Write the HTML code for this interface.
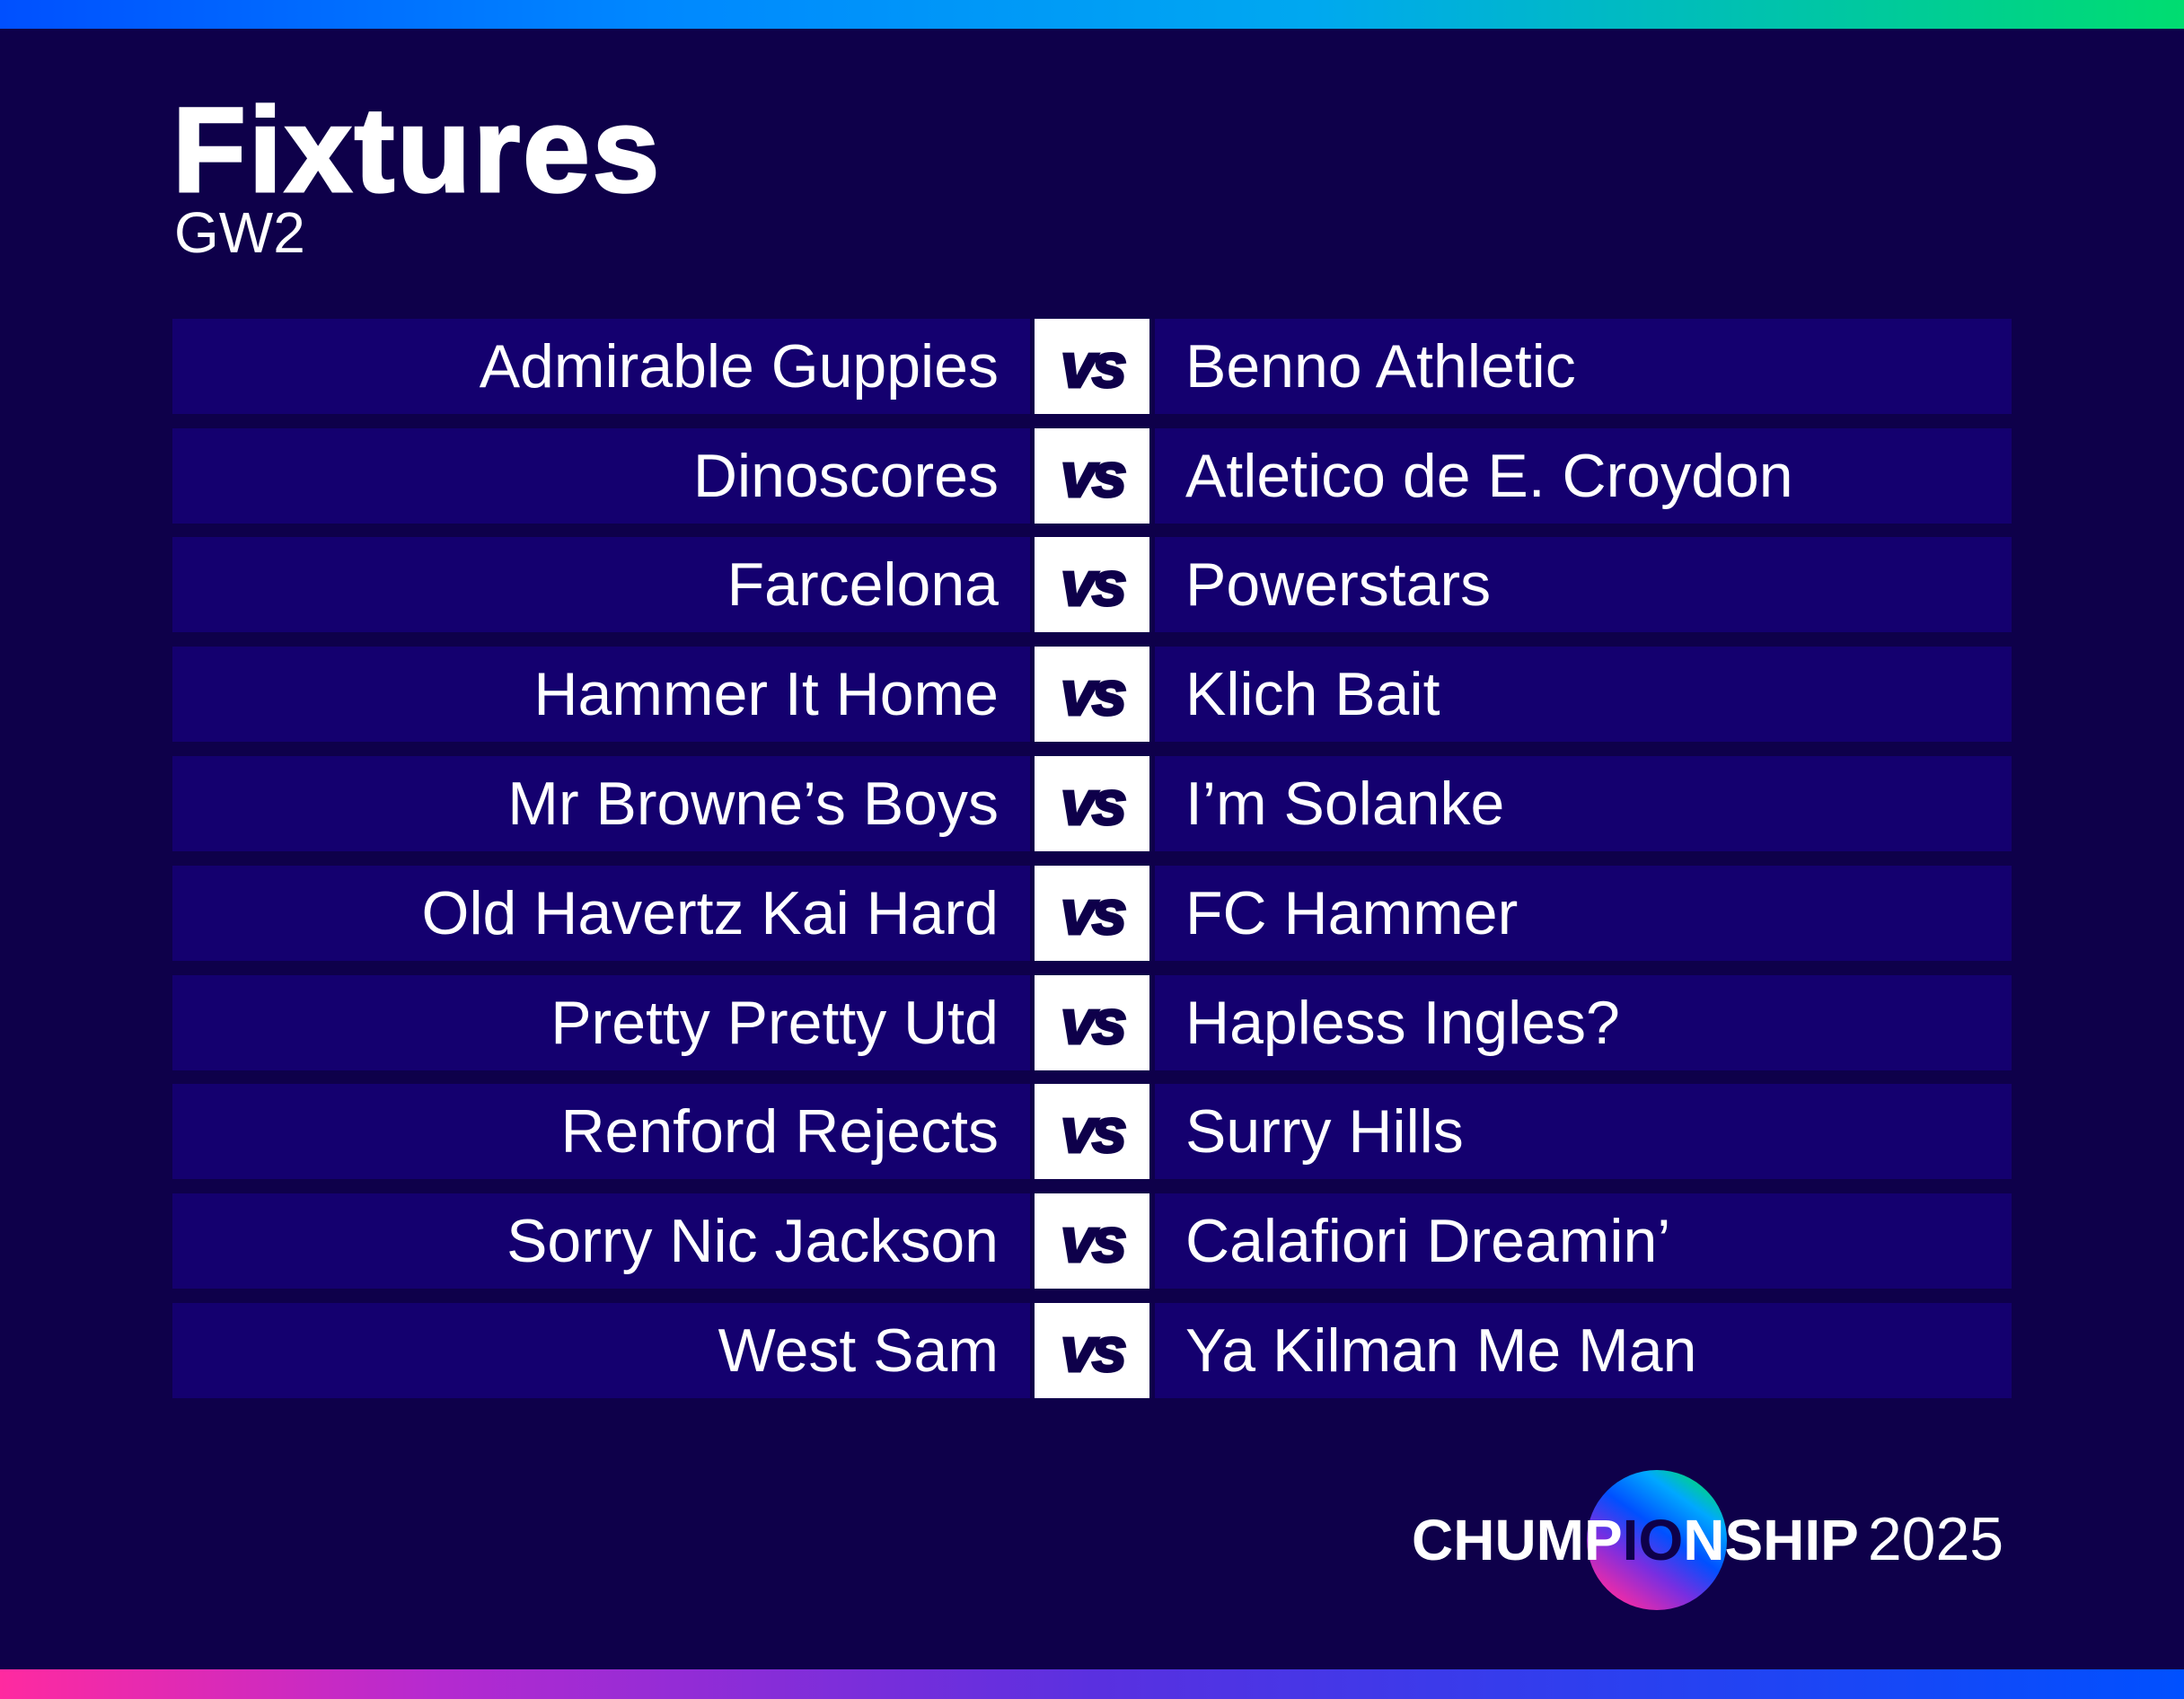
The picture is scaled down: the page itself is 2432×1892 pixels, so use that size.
<!DOCTYPE html>
<html><head><meta charset="utf-8"><style>
*{margin:0;padding:0;box-sizing:border-box}
body{width:2432px;height:1892px;background:#0e004a;position:relative;overflow:hidden;font-family:"Liberation Sans",sans-serif;color:#fff}
.top{position:absolute;left:0;top:0;width:2432px;height:32px;background:linear-gradient(90deg,#0050ff 0%,#0088ff 30%,#00a8f0 60%,#00c8a0 85%,#00dd70 100%)}
.bot{position:absolute;left:0;top:1859px;width:2432px;height:33px;background:linear-gradient(90deg,#ff2aa0 0%,#b52ad0 20%,#5a30e0 50%,#2a40f0 75%,#0050ff 100%)}
h1{position:absolute;left:192px;top:98px;font-size:134px;font-weight:bold;line-height:140px;letter-spacing:3px;-webkit-text-stroke:3px #fff}
.gw{position:absolute;left:194px;top:224px;font-size:64px;line-height:70px}
.row{position:absolute;left:192px;width:2048px;height:106px}
.l,.r{position:absolute;top:0;height:106px;background:#14006f;font-size:68px;line-height:106px;white-space:nowrap}
.l{left:0;width:955px;text-align:right;padding-right:35px}
.r{left:1094px;width:954px;padding-left:34px}
.vs{position:absolute;left:960px;top:0;width:128px;height:106px;background:#fff;color:#0e004a;font-weight:bold;font-style:italic;font-size:70px;line-height:104px;text-align:center;letter-spacing:-4px;-webkit-text-stroke:3px #0e004a}
.circ{position:absolute;left:1767px;top:1637px;width:156px;height:156px;border-radius:50%;background:linear-gradient(35deg,#ff2aa0 10%,#7a2ee0 35%,#0050ff 55%,#00a8ff 75%,#00dd66 92%)}
.brand{position:absolute;left:1572px;top:1676px;font-size:64px;line-height:76px;font-weight:bold;white-space:nowrap;letter-spacing:0px}
.brand .d{color:#0e004a}
.brand .y{font-weight:normal;letter-spacing:0;margin-left:10px;font-size:68px}
</style></head><body>
<div class="top"></div>
<h1>Fixtures</h1>
<div class="gw">GW2</div>

<div class="row" style="top:355px"><div class="l">Admirable Guppies</div><div class="vs">vs</div><div class="r">Benno Athletic</div></div>
<div class="row" style="top:477px"><div class="l">Dinoscores</div><div class="vs">vs</div><div class="r">Atletico de E. Croydon</div></div>
<div class="row" style="top:598px"><div class="l">Farcelona</div><div class="vs">vs</div><div class="r">Powerstars</div></div>
<div class="row" style="top:720px"><div class="l">Hammer It Home</div><div class="vs">vs</div><div class="r">Klich Bait</div></div>
<div class="row" style="top:842px"><div class="l">Mr Browne’s Boys</div><div class="vs">vs</div><div class="r">I’m Solanke</div></div>
<div class="row" style="top:964px"><div class="l">Old Havertz Kai Hard</div><div class="vs">vs</div><div class="r">FC Hammer</div></div>
<div class="row" style="top:1086px"><div class="l">Pretty Pretty Utd</div><div class="vs">vs</div><div class="r">Hapless Ingles?</div></div>
<div class="row" style="top:1207px"><div class="l">Renford Rejects</div><div class="vs">vs</div><div class="r">Surry Hills</div></div>
<div class="row" style="top:1329px"><div class="l">Sorry Nic Jackson</div><div class="vs">vs</div><div class="r">Calafiori Dreamin’</div></div>
<div class="row" style="top:1451px"><div class="l">West Sam</div><div class="vs">vs</div><div class="r">Ya Kilman Me Man</div></div>

<div class="circ"></div>
<div class="brand">CHUMP<span class="d">IO</span>NSHIP<span class="y">2025</span></div>
<div class="bot"></div>
</body></html>
